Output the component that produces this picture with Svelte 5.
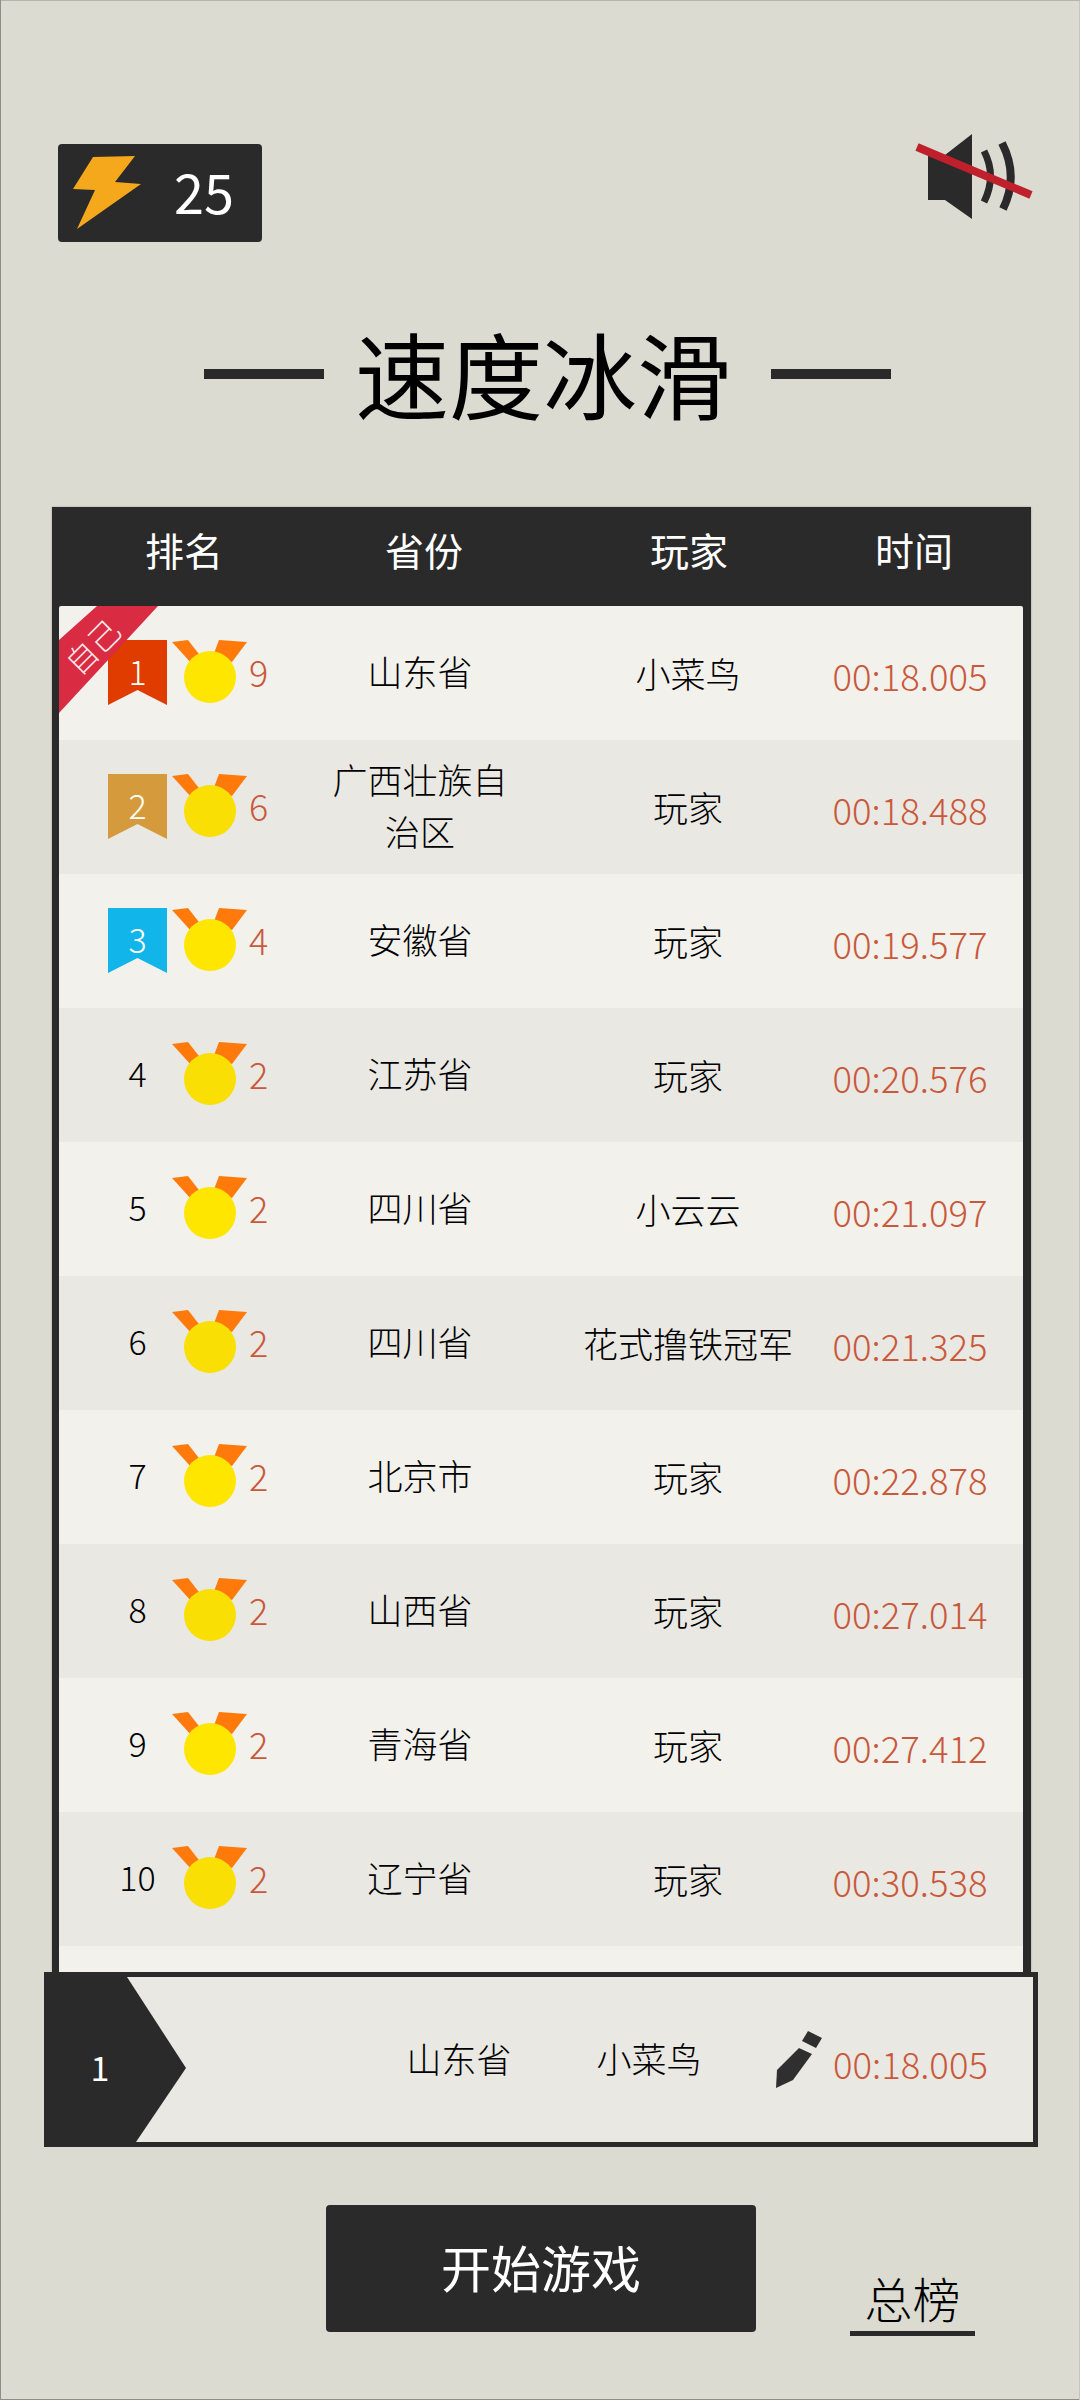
<script>
  const rows = [
    { n: 1, c: 9, p: '山东省', u: '小菜鸟', t: '00:18.005', flag: '#e03c00' },
    { n: 2, c: 6, p: '广西壮族自治区', u: '玩家', t: '00:18.488', flag: '#d49a3c' },
    { n: 3, c: 4, p: '安徽省', u: '玩家', t: '00:19.577', flag: '#12b5ea' },
    { n: 4, c: 2, p: '江苏省', u: '玩家', t: '00:20.576' },
    { n: 5, c: 2, p: '四川省', u: '小云云', t: '00:21.097' },
    { n: 6, c: 2, p: '四川省', u: '花式撸铁冠军', t: '00:21.325' },
    { n: 7, c: 2, p: '北京市', u: '玩家', t: '00:22.878' },
    { n: 8, c: 2, p: '山西省', u: '玩家', t: '00:27.014' },
    { n: 9, c: 2, p: '青海省', u: '玩家', t: '00:27.412' },
    { n: 10, c: 2, p: '辽宁省', u: '玩家', t: '00:30.538' },
    { n: 11, c: 2, p: '', u: '', t: '' }
  ];
</script>

<div class="page">
  <div class="top">
    <div class="energy">
      <svg class="bolt" viewBox="58 144 90 98" width="90" height="98">
        <polygon points="93,157 135,156 115,182 141,184 77,229 95,190 73,189" fill="#f5a81c" />
      </svg>
      <span class="energy-num">25</span>
    </div>
    <svg class="sound" viewBox="915 130 120 92" width="120" height="92">
      <polygon points="928,155 945,155 972,134 972,219 945,200 928,200" fill="#2a2a2a" />
      <path d="M984 151Q997 176 984 202" fill="none" stroke="#2a2a2a" stroke-width="7" />
      <path d="M1002 143Q1019 176 1003 209" fill="none" stroke="#2a2a2a" stroke-width="8" />
      <line x1="917" y1="147" x2="1031" y2="195" stroke="#c01f2c" stroke-width="8" />
    </svg>
  </div>

  <div class="title">
    <i class="dash"></i>
    <h1>速度冰滑</h1>
    <i class="dash"></i>
  </div>

  <div class="board">
    <div class="head">
      <span class="h1">排名</span>
      <span class="h2">省份</span>
      <span class="h3">玩家</span>
      <span class="h4">时间</span>
    </div>
    <div class="list">
      <div class="self">
        <span>自己</span>
      </div>
      {#each rows as r, i}
        <div class="row" class:alt={i % 2 === 1}>
          {#if r.p}
            <div class="rank" class:flag={r.flag}>
              {#if r.flag}
                <svg class="mark" viewBox="0 0 59 65" width="59" height="65">
                  <polygon points="0,0 59,0 59,65 29.5,50 0,65" fill={r.flag} />
                </svg>
              {/if}
              <span>{r.n}</span>
            </div>
            <svg class="medal" viewBox="0 0 75 64" width="75" height="64">
              <polygon points="0,2 16,0 30,18 20,24" fill="#ff7a0a" />
              <polygon points="75,2 47,0 41,16 60,22" fill="#ff7a0a" />
              <circle cx="38" cy="37" r="26" class="disc" />
            </svg>
            <div class="count">{r.c}</div>
            <div class="prov">{r.p}</div>
            <div class="user">{r.u}</div>
            <div class="time">{r.t}</div>
          {/if}
        </div>
      {/each}
    </div>
  </div>

  <div class="mine">
    <div class="chev"><span>1</span></div>
    <div class="mine-prov">山东省</div>
    <div class="mine-user">小菜鸟</div>
    <svg class="pencil" viewBox="775 2029 48 58" width="48" height="58">
      <polygon points="808,2029 822,2036 816,2046 802,2039" fill="#2f2f2f" />
      <polygon points="799,2046 812,2052 793,2078 776,2086 777,2068" fill="#2f2f2f" />
    </svg>
    <div class="mine-time">00:18.005</div>
  </div>

  <div class="bottom">
    <div class="start">开始游戏</div>
    <div class="total">总榜</div>
  </div>
</div>

<style>
  :global(body) {
    margin: 0;
    background: #dbdbd2;
  }
  .page {
    width: 1080px;
    height: 2400px;
    box-sizing: border-box;
    overflow: hidden;
    background: #dbdbd2;
    padding-top: 130px;
    font-family: "Noto Sans CJK SC", "Noto Sans", sans-serif;
    color: #000;
    box-shadow: inset 1px 0 0 #8e8e88, inset 0 1px 0 #b5b5ad, inset -1px 0 0 #c6c6be, inset 0 -1px 0 #8e8e88;
  }
  .top {
    display: flex;
    justify-content: space-between;
    align-items: flex-start;
    height: 98px;
    padding: 0 45px 0 58px;
  }
  .energy {
    margin-top: 14px;
    width: 204px;
    height: 98px;
    background: #2a2a2a;
    border-radius: 4px;
    display: flex;
    align-items: center;
    color: #fff;
  }
  .bolt {
    flex: none;
  }
  .energy-num {
    margin-left: 26px;
    margin-bottom: 5px;
    font-size: 54px;
    line-height: 1;
    font-weight: 400;
  }
  .title {
    margin-top: 86px;
    height: 120px;
    display: flex;
    align-items: center;
    padding-left: 204px;
  }
  .dash {
    display: block;
    width: 120px;
    height: 10px;
    background: #2a2a2a;
    flex: none;
  }
  h1 {
    margin: 0 40px 4px 31px;
    font-size: 94px;
    font-weight: 400;
    line-height: 116px;
    color: #000;
  }
  .board {
    margin: 73px 0 0 52px;
    width: 979px;
    height: 1465px;
    box-sizing: border-box;
    background: #2a2a2a;
    padding: 0 8px 0 7px;
    box-shadow: 0 0 2px rgba(0, 0, 0, 0.25);
  }
  .head {
    height: 99px;
    color: #fff;
    font-size: 39px;
    line-height: 84px;
    display: flex;
  }
  .head span {
    text-align: center;
    flex: none;
  }
  .h1 { width: 250px; }
  .h2 { width: 230px; }
  .h3 { width: 300px; }
  .h4 { width: 150px; }
  .list {
    position: relative;
    height: 1366px;
    overflow: hidden;
    border-radius: 2px 2px 0 0;
  }
  .self {
    position: absolute;
    left: 0;
    top: 0;
    width: 100px;
    height: 108px;
    background: #d92c43;
    clip-path: polygon(38px 0, 99px 0, 0 107px, 0 34px);
    z-index: 2;
  }
  .self span {
    position: absolute;
    left: 2px;
    top: 25px;
    font-size: 31px;
    line-height: 30px;
    color: #fff;
    transform: rotate(-45deg);
    font-weight: 300;
    opacity: 0.9;
  }
  .row {
    height: 134px;
    box-sizing: border-box;
    background: #f2f1ec;
    display: flex;
    align-items: center;
    padding-left: 49px;
    font-size: 35px;
    font-weight: 300;
  }
  .row.alt {
    background: #e9e8e3;
  }
  .rank {
    position: relative;
    width: 59px;
    height: 65px;
    flex: none;
    text-align: center;
    font-size: 34px;
    color: #000;
    margin-bottom: 2px;
  }
  .rank.flag {
    color: #fff;
    font-weight: 300;
  }
  .rank span {
    position: relative;
    line-height: 62px;
  }
  .mark {
    position: absolute;
    left: 0;
    top: 0;
  }
  .medal {
    margin: 0 0 2px 5px;
    flex: none;
  }
  .disc {
    fill: #ffe600;
  }
  .alt .disc {
    fill: #f9df04;
  }
  .count {
    flex: none;
    width: 78px;
    padding-left: 2px;
    box-sizing: border-box;
    color: #c9593b;
    font-size: 36px;
    padding-bottom: 5px;
  }
  .prov {
    flex: none;
    width: 190px;
    text-align: center;
    line-height: 52px;
    padding-bottom: 4px;
  }
  .user {
    flex: none;
    width: 220px;
    margin-left: 63px;
    text-align: center;
    padding-bottom: 1px;
  }
  .time {
    flex: none;
    width: 160px;
    margin-left: 32px;
    text-align: center;
    color: #c9593b;
    padding-top: 5px;
    font-size: 36.500px;
    white-space: nowrap;
  }
  .mine {
    position: relative;
    margin-left: 44px;
    width: 994px;
    height: 175px;
    box-sizing: border-box;
    border: 5px solid #2a2a2a;
    background: #e9e8e3;
    display: flex;
    align-items: center;
    font-size: 35px;
    font-weight: 300;
  }
  .chev {
    flex: none;
    width: 137px;
    height: 165px;
    background: #2a2a2a;
    clip-path: polygon(0 0, 78px 0, 137px 91px, 87px 165px, 0 165px);
    color: #fff;
    display: flex;
    align-items: center;
  }
  .chev span {
    width: 102px;
    text-align: center;
    padding-top: 14px;
    font-size: 34px;
    font-weight: 400;
  }
  .mine-prov {
    flex: none;
    width: 120px;
    margin-left: 213px;
    text-align: center;
    white-space: nowrap;
    padding-bottom: 4px;
  }
  .mine-user {
    flex: none;
    width: 120px;
    margin-left: 70px;
    text-align: center;
    white-space: nowrap;
    padding-bottom: 4px;
  }
  .pencil {
    flex: none;
    margin-left: 66px;
  }
  .mine-time {
    flex: none;
    width: 165px;
    margin-left: 10px;
    color: #c9593b;
    padding-top: 7px;
    font-size: 36.500px;
    white-space: nowrap;
  }
  .bottom {
    margin-top: 58px;
    display: flex;
    align-items: flex-start;
    padding-left: 326px;
  }
  .start {
    width: 430px;
    height: 127px;
    background: #2a2a2a;
    border-radius: 4px;
    color: #fff;
    font-size: 50px;
    line-height: 122px;
    text-align: center;
  }
  .total {
    margin: 69px 0 0 94px;
    width: 125px;
    height: 62px;
    box-sizing: border-box;
    border-bottom: 5px solid #2a2a2a;
    text-align: center;
    font-size: 48px;
    line-height: 47px;
    font-weight: 300;
  }
</style>
